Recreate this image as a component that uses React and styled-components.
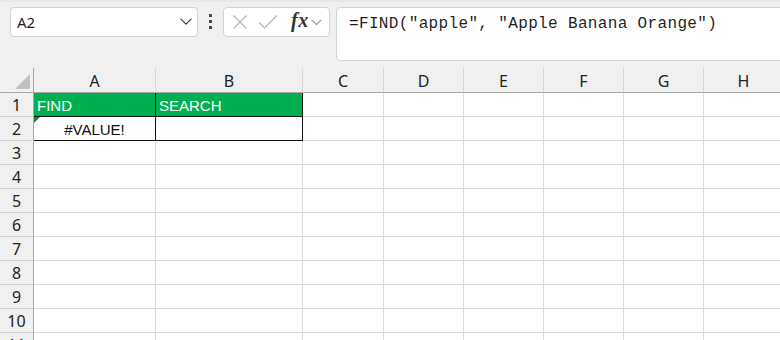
import React from 'react'
import styled, { createGlobalStyle } from 'styled-components'

const GlobalStyle = createGlobalStyle`
  html, body {
    margin: 0;
    padding: 0;
    background: #ffffff;
    overflow: hidden;
  }
  body {
    font-family: 'Liberation Sans', Arial, sans-serif;
  }
`

const Page = styled.div`
  width: 780px;
  height: 340px;
  overflow: hidden;
  background: #ffffff;
`

const Toolbar = styled.div`
  display: flex;
  align-items: flex-start;
  height: 68px;
  box-sizing: border-box;
  padding: 5px 0 0 10px;
  background: #f0f0f0;
  border-top: 2px solid #e8e8e8;
`

const NameBox = styled.div`
  display: flex;
  align-items: center;
  justify-content: space-between;
  box-sizing: border-box;
  width: 188px;
  height: 30px;
  padding: 0 5px 0 6px;
  background: #ffffff;
  border: 1px solid #d4d4d4;
  border-radius: 4px;
  font-family: 'Noto Sans', 'Liberation Sans', sans-serif;
  font-size: 15px;
  color: #1f1f1f;
`

const Dots = styled.div`
  display: flex;
  flex-direction: column;
  gap: 3px;
  margin: 7px 11px 0 11px;

  span {
    display: block;
    width: 3px;
    height: 3px;
    background: #4a4a4a;
  }
`

const FxBox = styled.div`
  display: flex;
  align-items: center;
  box-sizing: border-box;
  width: 107px;
  height: 30px;
  padding: 0 0 0 8px;
  background: #ffffff;
  border: 1px solid #d4d4d4;
  border-radius: 4px;
`

const Fx = styled.span`
  font-family: 'Liberation Serif', 'Times New Roman', serif;
  font-style: italic;
  font-weight: 700;
  font-size: 20px;
  color: #333333;
  margin: -3px 2px 0 13px;
  letter-spacing: 0.5px;
`

const FormulaBar = styled.div`
  flex: 1;
  box-sizing: border-box;
  height: 54px;
  margin-left: 6px;
  margin-right: -10px;
  padding: 6px 12px;
  background: #ffffff;
  border: 1px solid #d4d4d4;
  border-radius: 4px;
  font-family: 'Liberation Mono', 'Courier New', monospace;
  font-size: 16px;
  letter-spacing: 0.35px;
  line-height: 20px;
  color: #1f1f1f;
  white-space: pre;
`

const Grid = styled.div`
  display: grid;
  grid-template-columns: 34px 122px 147px 81px 80px 80px 80px 80px 80px;
  grid-template-rows: 25px;
  grid-auto-rows: 24px;
`

const Corner = styled.div`
  position: relative;
  background: #f0f0f0;
  box-sizing: border-box;
  border-right: 1px solid #a8a8a8;
  border-bottom: 1px solid #a8a8a8;

  &::after {
    content: '';
    position: absolute;
    right: 3px;
    bottom: 3px;
    width: 0;
    height: 0;
    border-left: 15px solid transparent;
    border-bottom: 15px solid #c2c2c2;
  }
`

const ColHead = styled.div`
  display: flex;
  align-items: center;
  justify-content: center;
  box-sizing: border-box;
  background: #f0f0f0;
  border-right: 1px solid #d6d6d6;
  border-bottom: 1px solid #a8a8a8;
  font-family: 'Noto Sans', 'Open Sans', sans-serif;
  font-size: 16px;
  color: #222222;
  padding-top: 2px;
`

const RowHead = styled.div`
  display: flex;
  align-items: center;
  justify-content: center;
  box-sizing: border-box;
  background: #f0f0f0;
  border-right: 1px solid #a8a8a8;
  border-bottom: 1px solid #d6d6d6;
  font-family: 'Noto Sans', 'Open Sans', sans-serif;
  font-size: 16px;
  color: #222222;
`

const Cell = styled.div`
  position: relative;
  display: flex;
  align-items: center;
  justify-content: ${p => (p.$center ? 'center' : 'flex-start')};
  box-sizing: border-box;
  padding: 1px 3px 0;
  background: ${p => (p.$fill ? '#00b050' : '#ffffff')};
  color: ${p => (p.$fill ? '#ffffff' : '#111111')};
  border-right: 1px solid ${p => (p.$boxed ? '#111111' : '#dcdcdc')};
  border-bottom: 1px solid ${p => (p.$boxed ? '#111111' : '#dcdcdc')};
  font-family: 'Liberation Sans', Arial, sans-serif;
  font-size: 15px;
  white-space: nowrap;
`

const ErrorMark = styled.span`
  position: absolute;
  left: 0;
  top: 0;
  width: 0;
  height: 0;
  border-top: 6px solid #217a37;
  border-right: 6px solid transparent;
`

const columns = ['A', 'B', 'C', 'D', 'E', 'F', 'G', 'H']

const data = {
  1: { A: { text: 'FIND', fill: true, boxed: true }, B: { text: 'SEARCH', fill: true, boxed: true } },
  2: { A: { text: '#VALUE!', center: true, boxed: true, error: true }, B: { text: '', boxed: true } },
}

const Chevron = ({ size = 12, color = '#3b3b3b', width = 1.3 }) => (
  <svg width={size} height={size * 0.6} viewBox="0 0 12 7" fill="none">
    <path d="M1 1l5 5 5-5" stroke={color} strokeWidth={width} strokeLinecap="round" strokeLinejoin="round" />
  </svg>
)

const App = () => {
  const rows = Array.from({ length: 11 }, (_, i) => i + 1)
  return (
    <Page>
      <GlobalStyle />
      <Toolbar>
        <NameBox>
          <span>A2</span>
          <Chevron />
        </NameBox>
        <Dots>
          <span />
          <span />
          <span />
        </Dots>
        <FxBox>
          <svg width="16" height="16" viewBox="0 0 16 16" fill="none">
            <path d="M1.5 1.5l13 13M14.5 1.5l-13 13" stroke="#b4b4b4" strokeWidth="1.2" />
          </svg>
          <svg width="20" height="16" viewBox="0 0 20 16" fill="none" style={{ marginLeft: 10 }}>
            <path d="M1 8.5l5.5 5.5L19 1.5" stroke="#b4b4b4" strokeWidth="1.2" />
          </svg>
          <Fx>fx</Fx>
          <Chevron size={11} color="#8a8a8a" width={1.1} />
        </FxBox>
        <FormulaBar>=FIND("apple", "Apple Banana Orange")</FormulaBar>
      </Toolbar>
      <Grid>
        <Corner />
        {columns.map(c => (
          <ColHead key={c}>{c}</ColHead>
        ))}
        {rows.map(r => (
          <React.Fragment key={r}>
            <RowHead>{r}</RowHead>
            {columns.map(c => {
              const d = (data[r] && data[r][c]) || {}
              return (
                <Cell key={c} $fill={d.fill} $boxed={d.boxed} $center={d.center}>
                  {d.error && <ErrorMark />}
                  {d.text}
                </Cell>
              )
            })}
          </React.Fragment>
        ))}
      </Grid>
    </Page>
  )
}

export default App
